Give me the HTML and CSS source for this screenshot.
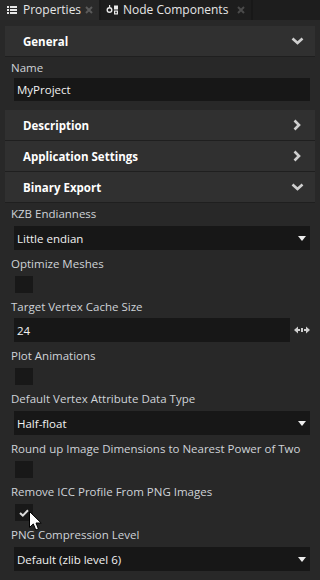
FILE: index.html
```html
<!DOCTYPE html>
<html>
<head>
<meta charset="utf-8">
<link rel="stylesheet" href="styles.css">
</head>
<body>
<div class="tabs">
  <div class="tab active">
    <svg class="tab-icon" width="10" height="8" viewBox="0 0 10 8"><rect x="0" y="0" width="2" height="2" fill="#e8e8e8"/><rect x="3" y="0" width="7" height="2" fill="#e8e8e8"/><rect x="0" y="3" width="2" height="2" fill="#e8e8e8"/><rect x="3" y="3" width="7" height="2" fill="#e8e8e8"/><rect x="0" y="6" width="2" height="2" fill="#e8e8e8"/><rect x="3" y="6" width="7" height="2" fill="#e8e8e8"/></svg>
    <span class="tab-label">Properties</span>
    <svg class="tab-close" width="8" height="8" viewBox="0 0 8 8"><path d="M1 1L7 7M7 1L1 7" stroke="#5a5a5a" stroke-width="2"/></svg>
  </div>
  <div class="tab second">
    <svg class="tab-icon" width="13" height="10" viewBox="0 0 13 10"><circle cx="3.5" cy="5" r="2.3" fill="none" stroke="#e8e8e8" stroke-width="1.4"/><rect x="3" y="0" width="1.2" height="2.6" fill="#e8e8e8"/><rect x="8" y="0.5" width="4" height="4" fill="#e8e8e8"/><rect x="8.6" y="6.1" width="2.8" height="2.8" fill="none" stroke="#e8e8e8" stroke-width="1.2"/></svg>
    <span class="tab-label">Node Components</span>
    <svg class="tab-close" width="8" height="8" viewBox="0 0 8 8"><path d="M1 1L7 7M7 1L1 7" stroke="#4a4a4a" stroke-width="2"/></svg>
  </div>
</div>

<div class="panel">
  <div class="section">
    <div class="section-header"><span>General</span><svg class="chev" width="13" height="8" viewBox="0 0 13 8"><path d="M1.5 1.5L6.5 6L11.5 1.5" fill="none" stroke="#cfcfcf" stroke-width="2.6"/></svg></div>
    <div class="props">
      <div class="prop">
        <div class="label">Name</div>
        <div class="field text">MyProject</div>
      </div>
    </div>
  </div>

  <div class="section gap-before">
    <div class="section-header"><span>Description</span><svg class="chev-r" width="8" height="12" viewBox="0 0 8 12"><path d="M1.5 1.5L6 6L1.5 10.5" fill="none" stroke="#cfcfcf" stroke-width="2.6"/></svg></div>
  </div>
  <div class="section">
    <div class="section-header"><span>Application Settings</span><svg class="chev-r" width="8" height="12" viewBox="0 0 8 12"><path d="M1.5 1.5L6 6L1.5 10.5" fill="none" stroke="#cfcfcf" stroke-width="2.6"/></svg></div>
  </div>
  <div class="section">
    <div class="section-header"><span>Binary Export</span><svg class="chev" width="13" height="8" viewBox="0 0 13 8"><path d="M1.5 1.5L6.5 6L11.5 1.5" fill="none" stroke="#cfcfcf" stroke-width="2.6"/></svg></div>
    <div class="props tight">
      <div class="prop">
        <div class="label">KZB Endianness</div>
        <div class="field select"><span>Little endian</span><i class="tri"></i></div>
      </div>
      <div class="prop">
        <div class="label">Optimize Meshes</div>
        <div class="check"></div>
      </div>
      <div class="prop">
        <div class="label">Target Vertex Cache Size</div>
        <div class="num-row">
          <div class="field num">24</div>
          <svg class="spin" width="16" height="8" viewBox="0 0 16 8"><path d="M0 4L4 0.5V7.5Z" fill="#d0d0d0"/><rect x="3.5" y="3" width="2.5" height="2" fill="#d0d0d0"/><rect x="7" y="2" width="2" height="4" fill="#d0d0d0"/><rect x="10" y="3" width="2.5" height="2" fill="#d0d0d0"/><path d="M16 4L12 0.5V7.5Z" fill="#d0d0d0"/></svg>
        </div>
      </div>
      <div class="prop">
        <div class="label">Plot Animations</div>
        <div class="check"></div>
      </div>
      <div class="prop">
        <div class="label">Default Vertex Attribute Data Type</div>
        <div class="field select"><span>Half-float</span><i class="tri"></i></div>
      </div>
      <div class="prop">
        <div class="label">Round up Image Dimensions to Nearest Power of Two</div>
        <div class="check"></div>
      </div>
      <div class="prop">
        <div class="label">Remove ICC Profile From PNG Images</div>
        <div class="check checked">
          <svg width="10" height="8" viewBox="0 0 10 8"><path d="M1 4L3.8 6.6L9 1.2" fill="none" stroke="#dcdcdc" stroke-width="2"/></svg>
          <svg class="cursor" width="13" height="21" viewBox="0 0 13 21"><path d="M0.5 0.5V16.5L4.3 12.9L6.8 19L9.4 17.9L7 12H12.2Z" fill="#fff" stroke="#000" stroke-width="1"/></svg>
        </div>
      </div>
      <div class="prop">
        <div class="label">PNG Compression Level</div>
        <div class="field select"><span>Default (zlib level 6)</span><i class="tri"></i></div>
      </div>
    </div>
  </div>
</div>
</body>
</html>
```

FILE: styles.css
```css
html, body {
  margin: 0;
  padding: 0;
  background: #282828;
  width: 320px;
  height: 580px;
  overflow: hidden;
  font-family: "Open Sans", "Noto Sans", sans-serif;
  font-size: 11.5px;
  color: #d2d2d2;
}

.tabs {
  display: flex;
  height: 20px;
  background: #1d1d1d;
}

.tab {
  display: flex;
  align-items: center;
  height: 20px;
  padding: 0 6px 0 6px;
  color: #e6e6e6;
  font-size: 12px;
  border-right: 2px solid #181818;
}

.tab.active {
  background: #2a2a2a;
  width: 86px;
  padding-left: 7px;
  border-right: 2px solid #1a1a1a;
}

.tab-icon {
  flex: none;
  margin-right: 6px;
}

.tab.second {
  padding-left: 5px;
}

.tab.second .tab-icon {
  margin-right: 4px;
}

.tab-label {
  white-space: nowrap;
  line-height: 20px;
}

.tab-close {
  flex: none;
  margin-left: 9px;
}

.tab.active .tab-close {
  margin-left: auto;
}

.panel {
  padding: 6px 5px 0 5px;
}

.section-header {
  display: flex;
  align-items: center;
  justify-content: space-between;
  height: 30px;
  background: #303030;
  border-bottom: 1px solid #1f1f1f;
  padding: 0 11px 0 18px;
  font-weight: 700;
  font-size: 11.5px;
  color: #ffffff;
}

.chev-r {
  margin-right: 3px;
}

.gap-before {
  margin-top: 9px;
}

.props {
  padding: 2px 5px 0 6px;
}

.prop {
  margin-bottom: 5px;
}

.label {
  height: 18px;
  line-height: 18px;
  color: #cfd3d8;
  white-space: nowrap;
}

.field {
  background: #171717;
  margin: 2px 0 0 3px;
  color: #f2f2f2;
  display: flex;
  align-items: center;
  padding: 0 0 0 3px;
  box-sizing: border-box;
}

.field.text {
  height: 23px;
  margin-top: 1px;
}

.field.select {
  height: 24px;
  margin-top: 3px;
  justify-content: space-between;
  padding-right: 4px;
}

.tri {
  width: 0;
  height: 0;
  border-left: 4.5px solid transparent;
  border-right: 4.5px solid transparent;
  border-top: 5px solid #ececec;
}

.check {
  position: relative;
  width: 18px;
  height: 17px;
  margin: 3px 0 0 4px;
  background: #181818;
  display: flex;
  align-items: center;
  justify-content: center;
}

.num-row {
  display: flex;
  align-items: center;
  margin-top: 2px;
}

.num-row .field {
  flex: 1;
  height: 24px;
  margin-top: 0;
}

.spin {
  flex: none;
  margin-left: 4px;
}

.cursor {
  position: absolute;
  left: 14px;
  top: 7px;
}
```
